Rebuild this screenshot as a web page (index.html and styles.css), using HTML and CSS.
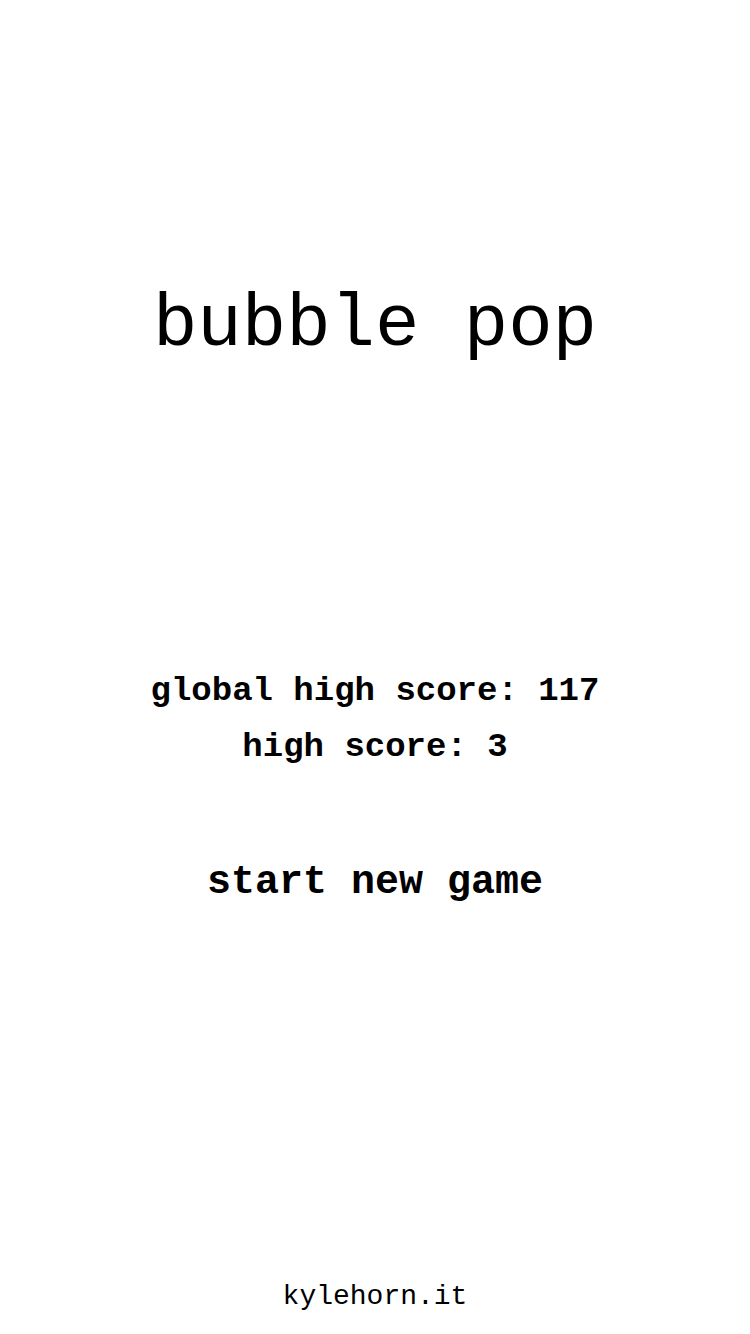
FILE: index.html
```html
<!DOCTYPE html>
<html lang="en">
<head>
    <meta charset="UTF-8">
    <meta name="viewport" content="width=device-width, initial-scale=1.0">
    <title>bubble pop</title>
    <link rel="stylesheet" href="styles.css">
</head>
<body>

    <main class="menu">
        <h1 class="title">bubble pop</h1>

        <section class="scores">
            <p>global high score: <span id="globalScore">117</span></p>
            <p>high score: <span id="highScore">3</span></p>
        </section>

        <button class="start-btn" id="startBtn">start new game</button>

        <footer class="footer">
            <a href="#">kylehorn.it</a>
        </footer>
    </main>

</body>
</html>
```

FILE: styles.css
```css
body {
    font-family: "Liberation Mono", "DejaVu Sans Mono", monospace;
    background-color: #fff;
    color: #000;
    margin: 0;
    padding: 0;
}
.menu {
    height: 1334px;
    box-sizing: border-box;
    padding: 288px 0 23px;
    display: flex;
    flex-direction: column;
    align-items: center;
    text-align: center;
}
.title {
    margin: 0;
    font-size: 74px;
    font-weight: normal;
    line-height: 1;
}
.scores {
    margin-top: 301px;
}
.scores p {
    margin: 0;
    font-size: 34px;
    font-weight: bold;
    line-height: 56px;
}
.start-btn {
    margin-top: 88px;
    padding: 0;
    border: none;
    background: none;
    color: #000;
    font-family: inherit;
    font-size: 40px;
    font-weight: bold;
    line-height: 1;
    cursor: pointer;
}
.footer {
    margin-top: auto;
    font-size: 28px;
    line-height: 1;
}
.footer a {
    color: #000;
    text-decoration: none;
}
```
